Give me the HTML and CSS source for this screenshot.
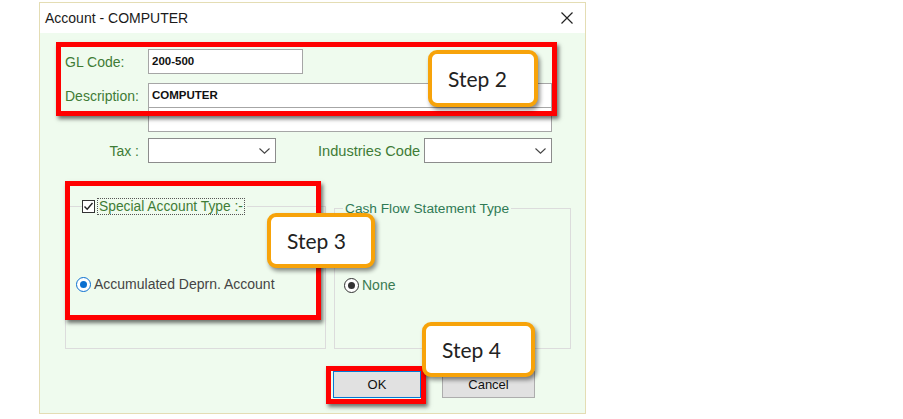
FILE: index.html
```html
<!DOCTYPE html>
<html>
<head>
<meta charset="utf-8">
<link rel="stylesheet" href="styles.css">
</head>
<body>
<div class="window">
  <div class="titlebar">
    <span class="title">Account - COMPUTER</span>
    <svg class="close" width="12" height="12" viewBox="0 0 12 12"><path d="M0.5 0.5 L11.5 11.5 M11.5 0.5 L0.5 11.5" stroke="#222" stroke-width="1.2" fill="none"/></svg>
  </div>
  <div class="body">
    <div class="row">
      <span class="lbl">GL Code:</span>
      <div class="input w-gl">200-500</div>
    </div>
    <div class="row r-desc">
      <span class="lbl">Description:</span>
      <div class="input w-desc">COMPUTER</div>
    </div>
    <div class="row r-desc2">
      <span class="lbl"></span>
      <div class="input w-desc"></div>
    </div>
    <div class="row r-tax">
      <span class="lbl lbl-right">Tax :</span>
      <div class="select"><svg width="11" height="6" viewBox="0 0 11 6"><path d="M0.5 0.5 L5.5 5.2 L10.5 0.5" stroke="#444" stroke-width="1.1" fill="none"/></svg></div>
      <span class="lbl ind-lbl">Industries Code</span>
      <div class="select"><svg width="11" height="6" viewBox="0 0 11 6"><path d="M0.5 0.5 L5.5 5.2 L10.5 0.5" stroke="#444" stroke-width="1.1" fill="none"/></svg></div>
    </div>
    <div class="groups">
      <div class="group g-left">
        <div class="legend legend-left">
          <span class="checkbox"><svg width="11" height="11" viewBox="0 0 11 11"><path d="M1.5 5.5 L4.2 8.3 L9.5 2" stroke="#222" stroke-width="1.4" fill="none"/></svg></span>
          <span class="focus-lbl">Special Account Type :-</span>
        </div>
        <div class="radio-row rr-left">
          <span class="radio radio-blue"><span class="dot"></span></span>
          <span class="radio-text">Accumulated Deprn. Account</span>
        </div>
      </div>
      <div class="group g-right">
        <div class="legend legend-right">Cash Flow Statement Type</div>
        <div class="radio-row rr-right">
          <span class="radio radio-dark"><span class="dot"></span></span>
          <span class="radio-text none-text">None</span>
        </div>
      </div>
    </div>
    <div class="buttons">
      <div class="btn ok">OK</div>
      <div class="btn cancel">Cancel</div>
    </div>
  </div>

  <div class="hl hl-top"></div>
  <div class="hl hl-special"></div>
  <div class="hl hl-ok"></div>
  <div class="callout c2">Step 2</div>
  <div class="callout c3">Step 3</div>
  <div class="callout c4">Step 4</div>
</div>
</body>
</html>
```
FILE: styles.css
```css
html, body {
  margin: 0;
  background: #ffffff;
}
body {
  font-family: "Liberation Sans", Arial, sans-serif;
}
.window {
  position: relative;
  width: 545px;
  height: 410px;
  margin: 2px 0 0 39px;
  border: 1px solid #e4ddb4;
  background: #effbee;
}
.titlebar {
  height: 30px;
  background: #ffffff;
  display: flex;
  align-items: center;
  justify-content: space-between;
  padding: 0 12px 0 5px;
}
.title {
  font-size: 14px;
  color: #1a1a1a;
}
.body {
  padding: 16px 0 0 25px;
}
.row {
  display: flex;
  align-items: center;
  height: 25px;
}
.lbl {
  width: 83px;
  flex: none;
  font-size: 14px;
  color: #3f7c36;
}
.lbl-right {
  text-align: right;
  padding-right: 9px;
  box-sizing: border-box;
}
.input {
  height: 25px;
  box-sizing: border-box;
  border: 1px solid #a6a6a6;
  background: #ffffff;
  font-size: 11.5px;
  font-weight: bold;
  color: #111;
  padding: 0 0 2px 3px;
  display: flex;
  align-items: center;
}
.w-gl { width: 155px; }
.w-desc { width: 404px; }
.r-desc { margin-top: 9px; }
.r-desc2 { margin-top: -1px; }
.r-tax { margin-top: 6px; }
.select {
  width: 128px;
  height: 25px;
  flex: none;
  box-sizing: border-box;
  border: 1px solid #8c8c8c;
  background: #ffffff;
  display: flex;
  justify-content: flex-end;
  align-items: center;
  padding: 1px 5px 0 0;
}
.ind-lbl {
  width: 106px;
  margin-left: 42px;
  font-size: 14.6px;
  white-space: nowrap;
}
.groups {
  display: flex;
  align-items: flex-end;
  gap: 8px;
  margin-top: 43px;
}
.group {
  box-sizing: border-box;
  border: 1px solid #dcdcdc;
}
.g-left { width: 261px; height: 143px; }
.g-right { width: 237px; height: 141px; }
.legend {
  display: flex;
  align-items: center;
  height: 17px;
  margin-top: -9px;
  background: #effbee;
  width: max-content;
}
.legend-left {
  margin-left: 16px;
  padding-right: 2px;
}
.legend-right {
  margin-left: 8px;
  padding: 0 2px;
  font-size: 13.7px;
  color: #2f7a55;
}
.checkbox {
  width: 13px;
  height: 13px;
  box-sizing: border-box;
  border: 1px solid #333;
  background: #ffffff;
  display: grid;
  place-items: center;
}
.focus-lbl {
  margin-left: 2px;
  padding: 0 1px;
  border: 1px dotted #555;
  font-size: 13.8px;
  color: #3f7c36;
  line-height: 15px;
}
.radio-row {
  display: flex;
  align-items: center;
  height: 16px;
}
.rr-left { margin: 61px 0 0 10px; }
.rr-right { margin: 60px 0 0 9px; }
.radio {
  width: 15px;
  height: 15px;
  box-sizing: border-box;
  border-radius: 50%;
  display: grid;
  place-items: center;
  background: #ffffff;
}
.radio .dot {
  width: 7px;
  height: 7px;
  border-radius: 50%;
}
.radio-blue { border: 1px solid #0a6fd0; }
.radio-blue .dot { background: #0a6fd0; }
.radio-dark { border: 1px solid #333; }
.radio-dark .dot { background: #333; }
.radio-text {
  margin-left: 3px;
  font-size: 14px;
  color: #444;
}
.none-text { color: #3a7a52; }
.buttons {
  display: flex;
  gap: 21px;
  margin: 22px 0 0 268px;
}
.btn {
  height: 27px;
  box-sizing: border-box;
  border: 1px solid #adadad;
  background: #e1e1e1;
  font-size: 13px;
  color: #111;
  display: flex;
  align-items: center;
  justify-content: center;
}
.ok { width: 88px; border-color: #0078d7; }
.cancel { width: 93px; }

/* overlays */
.hl {
  position: absolute;
  box-sizing: border-box;
  border: 5px solid #ff0000;
  box-shadow: 2px 3px 4px rgba(0, 0, 0, 0.55);
}
.hl-top { left: 16px; top: 39px; width: 501px; height: 74px; }
.hl-special { left: 25px; top: 178px; width: 256px; height: 139px; }
.hl-ok { left: 286px; top: 363px; width: 100px; height: 38px; }
.callout {
  position: absolute;
  box-sizing: border-box;
  border: 4px solid #f7a30a;
  border-radius: 9px;
  background: #ffffff;
  box-shadow: 2px 3px 4px rgba(0, 0, 0, 0.45);
  font-family: Lato, "Open Sans", sans-serif;
  font-size: 21px;
  color: #222;
  padding-left: 16px;
  display: flex;
  align-items: center;
}
.c2 { left: 388px; top: 47px; width: 110px; height: 57px; }
.c3 { left: 227px; top: 210px; width: 108px; height: 55px; }
.c4 { left: 382px; top: 319px; width: 113px; height: 55px; }
```
